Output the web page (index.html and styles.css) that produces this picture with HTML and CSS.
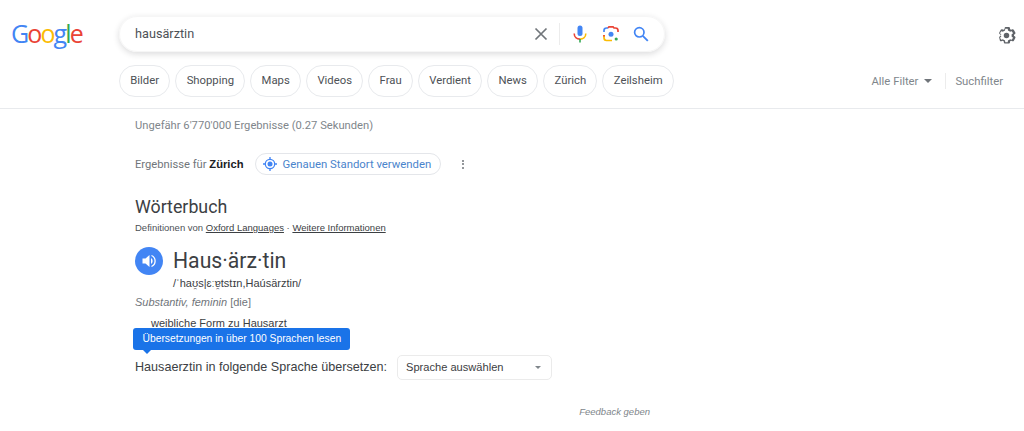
FILE: index.html
```html
<!DOCTYPE html>
<html lang="de">
<head>
<meta charset="utf-8">
<title>hausärztin - Google Suche</title>
<link rel="stylesheet" href="styles.css">
</head>
<body>
<header class="header">
  <div class="top-row">
    <div class="logo"><span class="b">G</span><span class="r">o</span><span class="y">o</span><span class="b">g</span><span class="g">l</span><span class="r">e</span></div>
    <div class="search">
      <span class="query">hausärztin</span>
      <svg class="ico-x" viewBox="0 0 14 14" width="14" height="14"><path d="M1.5 1.5l11 11M12.5 1.5l-11 11" stroke="#70757a" stroke-width="1.7" fill="none"/></svg>
      <span class="divider"></span>
      <svg class="ico-mic" viewBox="0 0 14 18" width="14" height="18"><rect x="4.5" y="0.5" width="5" height="10.5" rx="2.5" fill="#4285f4"/><path d="M1.2 8.5c0 3.4 2.6 5.6 5.8 5.6" stroke="#ea4335" stroke-width="1.6" fill="none"/><path d="M12.8 8.5c0 3.4-2.6 5.6-5.8 5.6" stroke="#fbbc05" stroke-width="1.6" fill="none"/><path d="M7 14v3.5" stroke="#34a853" stroke-width="1.6"/></svg>
      <svg class="ico-lens" viewBox="0 0 16 16" width="16" height="16"><path d="M1 6V4.500Q1 2 3.500 2H5" stroke="#4285f4" stroke-width="1.700" fill="none"/><path d="M5 2l1-1.200h4L11 2h1.500Q15 2 15 4.500V6" stroke="#ea4335" stroke-width="1.700" fill="none"/><path d="M1 9v2.500Q1 14.500 3.500 14.500H9" stroke="#fbbc05" stroke-width="1.700" fill="none"/><path d="M1 9v1.500" stroke="#ea4335" stroke-width="1.700" fill="none"/><circle cx="8" cy="8.200" r="2.500" fill="#4285f4"/><circle cx="13.200" cy="13" r="1.600" fill="#34a853"/></svg>
      <svg class="ico-search" viewBox="0 0 16 16" width="16" height="16"><circle cx="6.300" cy="6.300" r="4.700" stroke="#4285f4" stroke-width="1.700" fill="none"/><path d="M9.800 9.800l5 5" stroke="#4285f4" stroke-width="1.900"/></svg>
    </div>
    <svg class="ico-gear" viewBox="0 0 24 24" width="19" height="19"><path fill="#5f6368" fill-rule="evenodd" d="M13.850 22.250h-3.700c-.74 0-1.360-.54-1.480-1.270l-.27-1.710c-.43-.2-.85-.44-1.260-.73l-1.620.62c-.7.260-1.490-.02-1.830-.65L2.870 15.300c-.36-.66-.2-1.440.36-1.900l1.340-1.100a8 8 0 0 1 0-.6 8 8 0 0 1 0-.6l-1.340-1.100c-.58-.47-.73-1.280-.36-1.910l1.850-3.200c.36-.62 1.130-.9 1.800-.63l1.640.62c.41-.29.83-.53 1.260-.73l.27-1.720c.12-.72.74-1.260 1.480-1.260h3.700c.74 0 1.360.54 1.480 1.270l.27 1.710c.43.2.85.44 1.260.73l1.620-.62c.7-.26 1.490.02 1.830.65l1.840 3.190c.36.660.2 1.440-.36 1.900l-1.340 1.100a8 8 0 0 1 0 1.200l1.340 1.100c.57.470.73 1.270.36 1.910l-1.850 3.200c-.36.620-1.130.9-1.800.63l-1.640-.62c-.41.290-.83.530-1.260.73l-.27 1.720c-.12.720-.74 1.260-1.480 1.260zm-3.400-1.750h3.100l.37-2.380.46-.18c.56-.23 1.120-.55 1.650-.97l.39-.31 2.250.86 1.550-2.680-1.860-1.520.07-.49a7 7 0 0 0 0-1.660l-.07-.49 1.860-1.520-1.550-2.680-2.250.86-.39-.31a7 7 0 0 0-1.650-.97l-.46-.18-.37-2.380h-3.100l-.37 2.380-.46.18c-.56.23-1.120.55-1.650.97l-.39.31-2.250-.86-1.550 2.680 1.860 1.520-.7.490a7 7 0 0 0 0 1.660l.7.490-1.860 1.520 1.550 2.680 2.250-.86.39.31c.53.420 1.090.740 1.650.970l.46.180zM12 15.500a3.500 3.500 0 1 1 0-7 3.500 3.500 0 0 1 0 7z"/></svg>
  </div>
  <nav class="nav-row">
    <div class="chips">
      <a class="chip">Bilder</a>
      <a class="chip">Shopping</a>
      <a class="chip">Maps</a>
      <a class="chip">Videos</a>
      <a class="chip">Frau</a>
      <a class="chip">Verdient</a>
      <a class="chip">News</a>
      <a class="chip">Zürich</a>
      <a class="chip">Zeilsheim</a>
    </div>
    <div class="tools">
      <span class="tool">Alle Filter</span>
      <span class="caret"></span>
      <span class="tool-sep"></span>
      <span class="tool">Suchfilter</span>
    </div>
  </nav>
</header>
<main class="main">
  <p class="stats">Ungefähr 6'770'000 Ergebnisse (0.27 Sekunden)</p>
  <div class="location">
    <span class="loc-text">Ergebnisse für <b>Zürich</b></span>
    <span class="loc-btn">
      <svg viewBox="0 0 14 14" width="14" height="14"><circle cx="7" cy="7" r="4.700" stroke="#4285f4" stroke-width="1.300" fill="none"/><circle cx="7" cy="7" r="2.500" fill="#4285f4"/><path d="M7 0v2.500M7 11.500V14M0 7h2.500M11.500 7H14" stroke="#4285f4" stroke-width="1.300"/></svg>
      Genauen Standort verwenden
    </span>
    <span class="dots"><i></i><i></i><i></i></span>
  </div>
  <h2 class="dict-title">Wörterbuch</h2>
  <p class="source">Definitionen von <u>Oxford Languages</u> · <u>Weitere Informationen</u></p>
  <div class="word-row">
    <span class="speaker">
      <svg viewBox="0 0 16 16" width="16" height="16"><path d="M1.500 5.500h3L8.500 2v12l-4-3.500h-3z" fill="#fff"/><path d="M10 5a3.500 3.500 0 0 1 0 6z" fill="#fff"/><path d="M10.500 2.500a6 6 0 0 1 0 11" stroke="#fff" stroke-width="1.300" fill="none"/></svg>
    </span>
    <span class="word">Haus·ärz·tin</span>
  </div>
  <p class="phon">/ˈhaʊ̯s|ɛːɐ̯tstɪn,Haúsärztin/</p>
  <p class="pos"><i>Substantiv, feminin</i> [die]</p>
  <p class="def">weibliche Form zu Hausarzt</p>
  <div class="tip">Übersetzungen in über 100 Sprachen lesen</div>
  <div class="translate">
    <span class="tr-label">Hausaerztin in folgende Sprache übersetzen:</span>
    <span class="select">Sprache auswählen<span class="caret small"></span></span>
  </div>
  <p class="feedback">Feedback geben</p>
</main>
</body>
</html>
```
FILE: styles.css
```css
* { box-sizing: border-box; }
html, body { margin: 0; padding: 0; }
body { background: #fff; color: #202124; font-family: "Liberation Sans", Arial, sans-serif; width: 1024px; height: 431px; overflow: hidden; }
p, h2 { margin: 0; font-weight: 400; }

.header { height: 109px; border-bottom: 1px solid #e8eaed; padding-top: 16px; }
.top-row { display: flex; align-items: center; height: 36px; padding-left: 11px; }
.logo { width: 108px; font-family: "Open Sans", sans-serif; font-size: 25px; line-height: 36px; letter-spacing: -1.900px; padding-bottom: 3px; }
.b { color: #4285f4; } .r { color: #ea4335; } .y { color: #fbbc05; } .g { color: #34a853; }
.search { width: 546px; height: 36px; border-radius: 18px; border: 1px solid #f6f6f6; box-shadow: 0 2px 6px rgba(32,33,36,.16); display: flex; align-items: center; padding: 0 15px 0 15px; }
.query { flex: 1; font-family: Roboto, sans-serif; font-size: 12.700px; color: #4d5156; padding-bottom: 2px; }
.ico-x { margin-right: 11px; }
.divider { width: 1px; height: 22px; background: #ececec; margin-right: 13px; }
.ico-mic { margin-right: 16px; }
.ico-lens { margin-right: 14px; }
.ico-gear { margin-left: 332px; margin-top: 2px; }

.nav-row { display: flex; align-items: center; justify-content: space-between; padding: 13px 21px 0 119px; }
.chips { display: flex; gap: 5px; }
.chip { height: 32px; padding: 0 10.300px; border: 1px solid #e8eaed; border-radius: 16px; font-family: Roboto, sans-serif; font-size: 11.300px; line-height: 29px; color: #4d5156; }
.tools { display: flex; align-items: center; font-family: Roboto, sans-serif; font-size: 11.300px; color: #80868b; }
.caret { width: 0; height: 0; border-left: 4px solid transparent; border-right: 4px solid transparent; border-top: 4px solid #70757a; margin-left: 6px; }
.tool-sep { width: 1px; height: 16px; background: #ececec; margin: 0 9px 0 13px; }

.main { padding-left: 135px; }
.stats { font-size: 11.200px; line-height: 14px; color: #80868b; padding-top: 10px; font-family: Roboto, sans-serif; }
.location { display: flex; align-items: center; margin-top: 20px; height: 22px; }
.loc-text { font-size: 11.200px; color: #70757a; font-family: Roboto, sans-serif; }
.loc-text b { color: #202124; font-weight: 700; font-family: "Liberation Sans", sans-serif; }
.loc-btn { display: flex; align-items: center; gap: 6px; height: 22px; margin-left: 11px; padding: 0 9px 0 7px; border: 1px solid #e4e6ea; border-radius: 11px; font-family: Roboto, sans-serif; font-size: 11.350px; color: #4a84cc; }
.dots { display: flex; flex-direction: column; gap: 1.500px; margin-left: 21px; }
.dots i { width: 2px; height: 2px; border-radius: 50%; background: #70757a; display: block; }

.dict-title { font-family: Roboto, sans-serif; font-size: 17.800px; line-height: 22px; color: #3c4043; margin-top: 21px; }
.source { font-size: 9.500px; line-height: 12px; color: #4d5156; margin-top: 4px; }
.source u { color: #3c4043; }
.word-row { display: flex; align-items: center; gap: 10px; margin-top: 13px; height: 28px; }
.speaker { width: 28px; height: 28px; border-radius: 50%; background: #4285f4; display: flex; align-items: center; justify-content: center; }
.word { font-family: Roboto, sans-serif; font-size: 21.200px; line-height: 28px; color: #3c4043; }
.phon { font-size: 11px; line-height: 14px; padding-left: 38px; margin-top: 1px; color: #3c4043; }
.pos { font-size: 11px; line-height: 14px; color: #70757a; margin-top: 5px; }
.def { font-size: 11px; line-height: 14px; padding-left: 16px; margin-top: 7px; color: #3c4043; }

.tip { position: relative; width: 217px; height: 22px; margin: -2px 0 0 -2px; background: #1a73e8; color: #fff; border-radius: 3px; font-size: 10.300px; line-height: 22px; padding-left: 9.500px; }
.tip::after { content: ""; position: absolute; left: 10px; top: 22px; border-left: 4px solid transparent; border-right: 4px solid transparent; border-top: 4px solid #1a73e8; }
.translate { display: flex; align-items: center; margin-top: 4px; height: 26px; }
.tr-label { font-size: 12.600px; color: #3c4043; }
.select { display: flex; align-items: center; justify-content: space-between; width: 155px; height: 25px; margin-left: 10px; padding: 0 10px 0 8px; border: 1px solid #ebebeb; border-radius: 5px; font-size: 11.100px; color: #3c4043; }
.caret.small { border-left-width: 3px; border-right-width: 3px; border-top-width: 3px; border-top-color: #80868b; }
.feedback { font-size: 9.500px; font-style: italic; color: #80868b; text-align: right; width: 515px; margin-top: 26px; }
```
